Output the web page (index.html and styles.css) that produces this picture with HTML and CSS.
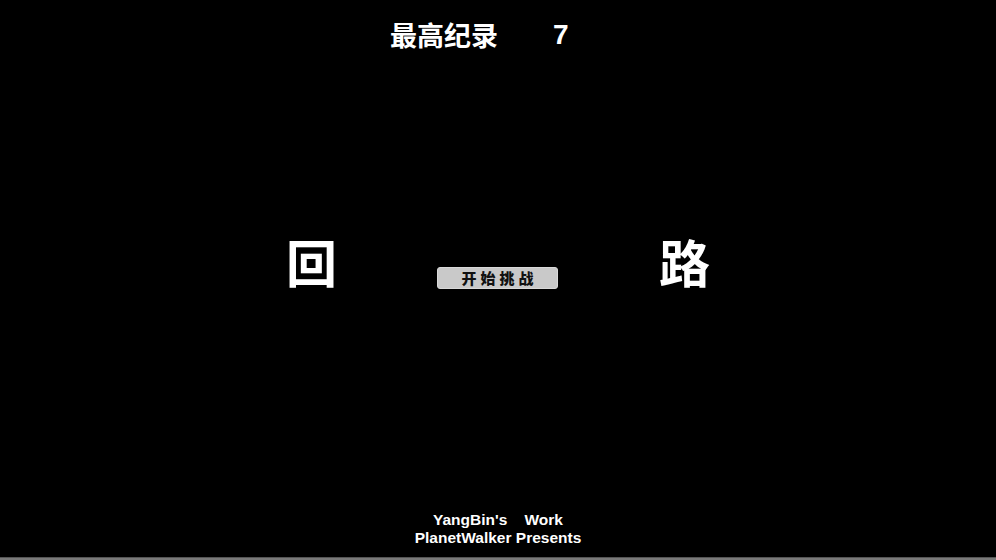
FILE: index.html
```html
<!DOCTYPE html>
<html lang="zh-CN">
<head>
<meta charset="utf-8">
<title>回路</title>
<link rel="stylesheet" href="styles.css">
</head>
<body>
<div class="screen">
  <header class="record">
    <span class="record-label">最高纪录</span>
    <span class="record-value">7</span>
  </header>
  <main class="stage">
    <span class="big big-left">回</span>
    <button class="start">开始挑战</button>
    <span class="big big-right">路</span>
  </main>
  <footer class="credits">
    <div class="credit-line">YangBin's    Work</div>
    <div class="credit-line">PlanetWalker Presents</div>
  </footer>
  <div class="bottom-bar"></div>
</div>
</body>
</html>
```

FILE: styles.css
```css
html, body {
  margin: 0;
  padding: 0;
  background: #000;
}
.screen {
  width: 996px;
  height: 560px;
  background: #000;
  color: #fff;
  display: flex;
  flex-direction: column;
  overflow: hidden;
}
.record {
  display: flex;
  align-items: center;
  padding: 20px 0 0 390px;
  height: 30px;
}
.record-label {
  font-family: "Noto Sans CJK SC", sans-serif;
  font-weight: 700;
  font-size: 27px;
  line-height: 30px;
}
.record-value {
  font-family: "Liberation Sans", Arial, sans-serif;
  font-weight: 700;
  font-size: 28px;
  line-height: 30px;
  margin-left: 55px;
}
.stage {
  display: flex;
  align-items: center;
  padding: 176px 0 0 286px;
  height: 70px;
}
.big {
  font-family: "Noto Sans CJK SC", sans-serif;
  font-weight: 700;
  font-size: 51px;
  line-height: 60px;
}
.start {
  margin-left: 100px;
  width: 121px;
  height: 22px;
  padding: 0 0 0 4px;
  border: 1px solid #d8d8d8;
  border-radius: 3px;
  background: #c9c9c9;
  color: #111;
  font-family: "Noto Sans CJK SC", sans-serif;
  font-weight: 900;
  font-size: 15px;
  line-height: 20px;
  letter-spacing: 4px;
  margin-top: 34px;
}
.big-right {
  margin-left: 101px;
}
.credits {
  margin-top: auto;
  text-align: center;
  font-family: "Liberation Sans", Arial, sans-serif;
  font-weight: 700;
  font-size: 15.5px;
  line-height: 18px;
  padding-bottom: 10px;
}
.credit-line {
  white-space: pre;
}
.bottom-bar {
  height: 2px;
  background: #7a7a7a;
  border-top: 1px solid #555;
}
```
